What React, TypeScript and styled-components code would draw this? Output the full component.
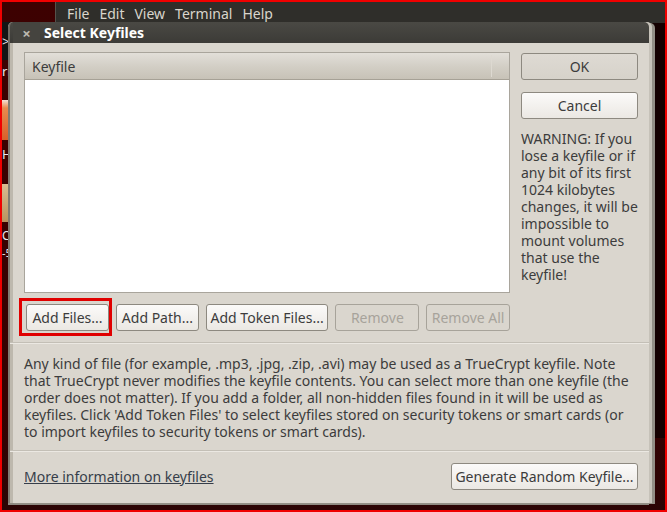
import React from 'react';
import styled, { createGlobalStyle } from 'styled-components';

const FONT = `"Noto Sans", "DejaVu Sans", sans-serif`;

const Global = createGlobalStyle`
  html, body { margin: 0; padding: 0; }
  body { width: 667px; height: 512px; overflow: hidden; background: #2a0303; }
`;

const Desktop = styled.div`
  position: relative;
  width: 667px;
  height: 512px;
  box-sizing: border-box;
  border: 2px solid #f00000;
  background: linear-gradient(180deg, #3d0101 0%, #350101 80%, #2b0404 100%);
  overflow: hidden;
  font-family: ${FONT};
`;

const DesktopIcon = styled.div<{ $top: number; $h: number; $bg: string; $fs?: number }>`
  position: absolute;
  left: 0;
  top: ${p => p.$top}px;
  min-width: 8px;
  height: ${p => p.$h}px;
  padding-right: 4px;
  background: ${p => p.$bg};
  color: #e8e8f0;
  font-size: ${p => p.$fs ?? 13}px;
  line-height: ${p => p.$h}px;
  white-space: nowrap;
`;

const Terminal = styled.div`
  position: absolute;
  left: 53px;
  top: 0;
  right: 0;
  bottom: 72px;
  background: #140000;
  border-left: 1px solid #55524b;
`;

const MenuBar = styled.div`
  height: 21px;
  background: #2f2e2a;
  display: flex;
  align-items: center;
  gap: 10px;
  padding: 2px 0 0 11px;
  box-sizing: border-box;
  color: #d9d5cc;
  font-size: 14px;
`;

const Window = styled.div`
  position: absolute;
  left: 6px;
  top: 20px;
  width: 641px;
  height: 481px;
  display: flex;
  flex-direction: column;
  border-radius: 5px 5px 0 0;
  background: #dad6ce;
  box-shadow: 3px 0 0 #c6c2b9, 6px 1px 0 #938f86, 0 2px 0 #8f8b82;
`;

const TitleBar = styled.div`
  height: 21px;
  flex: none;
  display: flex;
  align-items: center;
  border-radius: 5px 5px 0 0;
  background: linear-gradient(180deg, #4a4944 0%, #3c3b37 100%);
  border-left: 2px solid #6f6b63;
`;

const CloseBox = styled.div`
  width: 27px;
  height: 21px;
  margin-left: 3px;
  display: flex;
  align-items: center;
  justify-content: center;
  background: #45443f;
  color: #bdb9b1;
  font-size: 15px;
  font-weight: bold;
`;

const Title = styled.div`
  margin-left: 4px;
  color: #ffffff;
  font-size: 14px;
  font-weight: bold;
`;

const Body = styled.div`
  flex: 1;
  display: flex;
  flex-direction: column;
  border-left: 2px solid #807b72;
  box-shadow: inset 3px 0 0 #bdb8ad;
  padding: 9px 11px 0 14px;
  color: #3c3c3c;
  font-size: 13px;
`;

const TopRow = styled.div`
  display: flex;
  gap: 11px;
`;

const LeftCol = styled.div`
  width: 486px;
  display: flex;
  flex-direction: column;
`;

const List = styled.div`
  height: 239px;
  border: 1px solid #a9a59c;
  background: #ffffff;
  display: flex;
  flex-direction: column;
`;

const ListHeader = styled.div`
  height: 26px;
  display: flex;
  align-items: center;
  background: linear-gradient(180deg, #e2dfd9 0%, #d3cfc6 50%, #c7c2b7 100%);
  border-bottom: 1px solid #a6a196;
  font-size: 14px;
`;

const HeaderCell = styled.div<{ $w?: number }>`
  ${p => (p.$w ? `width: ${p.$w}px;` : 'flex: 1;')}
  height: 22px;
  display: flex;
  align-items: center;
  padding-left: 7px;
  box-sizing: border-box;
  & + & {
    border-left: 1px solid #ddd9d1;
  }
`;

const ButtonRow = styled.div`
  margin-top: 11px;
  display: flex;
  gap: 7px;
`;

const Button = styled.button<{ $w: number; $default?: boolean; $mt?: number }>`
  width: ${p => p.$w}px;
  height: 27px;
  margin-top: ${p => p.$mt ?? 0}px;
  padding: 0;
  box-sizing: border-box;
  border: 1px solid #8d8980;
  border-radius: 3px;
  background: ${p =>
    p.$default ? 'linear-gradient(180deg, #dedad3 0%, #d6d2ca 100%)' : 'linear-gradient(180deg, #fbfaf9 0%, #ebe8e3 100%)'};
  color: #3c3c3c;
  font-family: ${FONT};
  font-size: 14px;
  cursor: pointer;
  &:disabled {
    background: transparent;
    border-color: #a7a39a;
    color: #a7a39b;
    cursor: default;
  }
`;

const HighlightWrap = styled.div`
  position: relative;
  display: flex;
  margin-left: 2px;
`;

const Highlight = styled.div`
  position: absolute;
  left: -7px;
  top: -6px;
  right: -3px;
  bottom: -5px;
  border: 3px solid #e00000;
  pointer-events: none;
`;

const RightCol = styled.div`
  width: 117px;
  display: flex;
  flex-direction: column;
  padding-top: 1px;
`;

const Warning = styled.div`
  margin-top: 11px;
  font-size: 14px;
  line-height: 17px;
`;

const Separator = styled.div<{ $mt: number }>`
  margin: ${p => p.$mt}px -11px 0 -14px;
  height: 1px;
  background: #c3bfb6;
  border-bottom: 1px solid #ebe8e2;
`;

const Paragraph = styled.div`
  margin-top: 11px;
  font-size: 14px;
  line-height: 17px;
  white-space: nowrap;
`;

const Footer = styled.div`
  margin-top: 11px;
  display: flex;
  align-items: center;
  justify-content: space-between;
`;

const Link = styled.a`
  color: #363e4a;
  font-size: 14px;
  text-decoration: underline;
  cursor: pointer;
  margin-top: -1px;
`;

const paragraphLines = [
  'Any kind of file (for example, .mp3, .jpg, .zip, .avi) may be used as a TrueCrypt keyfile. Note',
  'that TrueCrypt never modifies the keyfile contents. You can select more than one keyfile (the',
  'order does not matter). If you add a folder, all non-hidden files found in it will be used as',
  "keyfiles. Click 'Add Token Files' to select keyfiles stored on security tokens or smart cards (or",
  'to import keyfiles to security tokens or smart cards).',
];

const warningLines = [
  'WARNING: If you',
  'lose a keyfile or if',
  'any bit of its first',
  '1024 kilobytes',
  'changes, it will be',
  'impossible to',
  'mount volumes',
  'that use the',
  'keyfile!',
];

export default function App() {
  return (
    <>
      <Global />
      <Desktop>
        <DesktopIcon $top={20} $h={38} $bg="#141414">&gt;</DesktopIcon>
        <DesktopIcon $top={62} $h={14} $bg="transparent">rr</DesktopIcon>
        <DesktopIcon $top={98} $h={40} $bg="linear-gradient(180deg,#f4e2d8 0%,#e98a4e 20%,#d9602a 100%)" />
        <DesktopIcon $top={142} $h={20} $bg="transparent">HA</DesktopIcon>
        <DesktopIcon $top={182} $h={38} $bg="linear-gradient(180deg,#d9bd92 0%,#b9925f 100%)" />
        <DesktopIcon $top={226} $h={16} $bg="transparent" $fs={12}>C</DesktopIcon>
        <DesktopIcon $top={244} $h={14} $bg="transparent" $fs={11}>-5</DesktopIcon>
        <Terminal>
          <MenuBar>
            <span>File</span>
            <span>Edit</span>
            <span>View</span>
            <span>Terminal</span>
            <span>Help</span>
          </MenuBar>
        </Terminal>
        <Window>
          <TitleBar>
            <CloseBox>×</CloseBox>
            <Title>Select Keyfiles</Title>
          </TitleBar>
          <Body>
            <TopRow>
              <LeftCol>
                <List>
                  <ListHeader>
                    <HeaderCell>Keyfile</HeaderCell>
                    <HeaderCell $w={18} />
                  </ListHeader>
                </List>
                <ButtonRow>
                  <HighlightWrap>
                    <Button $w={83}>Add Files...</Button>
                    <Highlight />
                  </HighlightWrap>
                  <Button $w={83}>Add Path...</Button>
                  <Button $w={123}>Add Token Files...</Button>
                  <Button $w={84} disabled>Remove</Button>
                  <Button $w={84} disabled>Remove All</Button>
                </ButtonRow>
              </LeftCol>
              <RightCol>
                <Button $w={117} $default>OK</Button>
                <Button $w={117} $mt={12}>Cancel</Button>
                <Warning>
                  {warningLines.map(l => (
                    <div key={l}>{l}</div>
                  ))}
                </Warning>
              </RightCol>
            </TopRow>
            <Separator $mt={11} />
            <Paragraph>
              {paragraphLines.map(l => (
                <div key={l}>{l}</div>
              ))}
            </Paragraph>
            <Separator $mt={10} />
            <Footer>
              <Link>More information on keyfiles</Link>
              <Button $w={187}>Generate Random Keyfile...</Button>
            </Footer>
          </Body>
        </Window>
      </Desktop>
    </>
  );
}
